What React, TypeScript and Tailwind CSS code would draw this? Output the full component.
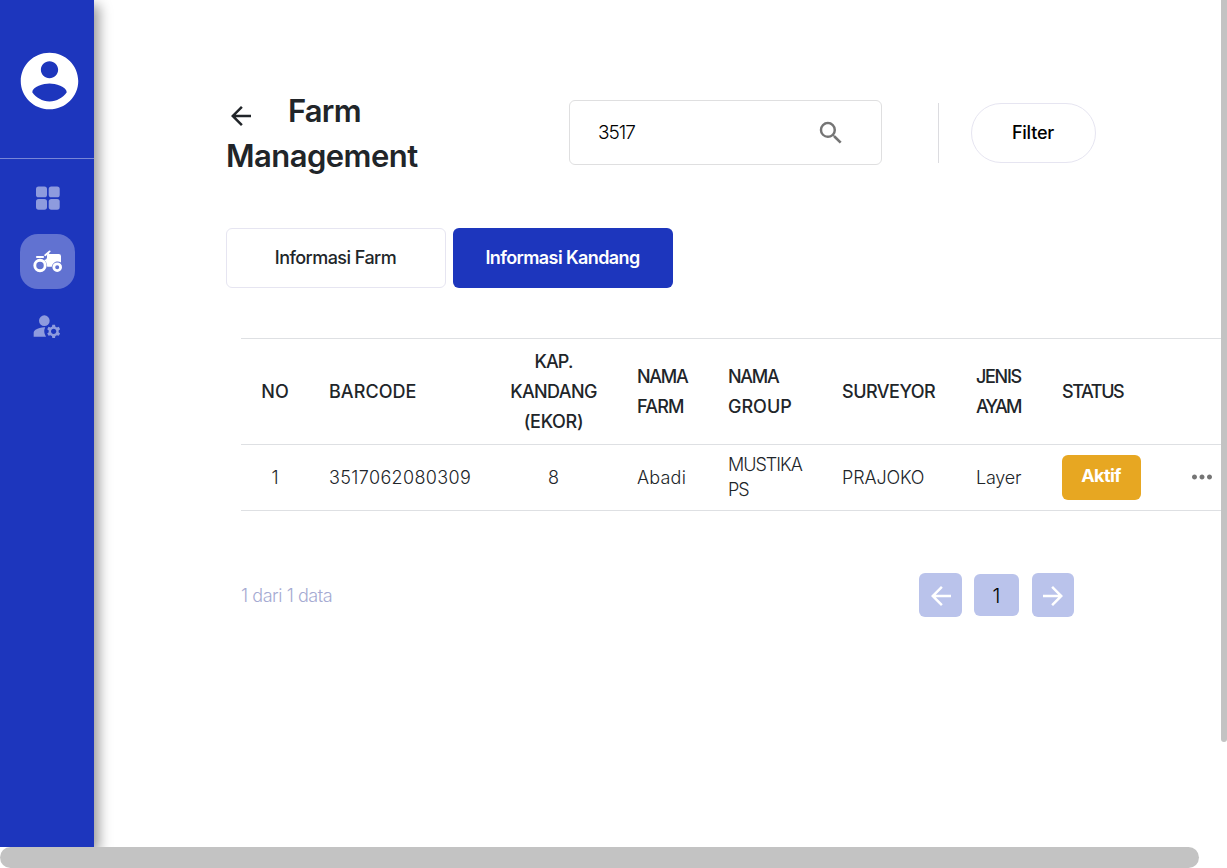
import type { ReactNode } from "react";
import {
  MdArrowBack,
  MdArrowForward,
  MdManageAccounts,
  MdMoreHoriz,
  MdSearch,
} from "react-icons/md";

function AccountIcon() {
  return (
    <svg viewBox="0 0 24 24" className="h-[68px] w-[69px] shrink-0 text-white" fill="currentColor" preserveAspectRatio="none">
      <path d="M12 2C6.48 2 2 6.48 2 12s4.48 10 10 10 10-4.48 10-10S17.52 2 12 2zm0 3c1.66 0 3 1.34 3 3s-1.34 3-3 3-3-1.34-3-3 1.34-3 3-3zm0 14.2c-2.5 0-4.71-1.28-6-3.22.03-1.99 4-3.08 6-3.08 1.99 0 5.97 1.09 6 3.08-1.29 1.94-3.5 3.22-6 3.22z" />
    </svg>
  );
}

function GridIcon() {
  return (
    <svg viewBox="0 0 24 24" className="size-6" fill="currentColor">
      <rect x="0" y="0.5" width="11" height="10.8" rx="2.6" />
      <rect x="12.7" y="0.5" width="11" height="10.8" rx="2.6" />
      <rect x="0" y="12.9" width="11" height="10.8" rx="2.6" />
      <rect x="12.7" y="12.9" width="11" height="10.8" rx="2.6" />
    </svg>
  );
}

function TractorIcon() {
  return (
    <svg viewBox="0 0 31 23" className="h-[23px] w-[31px]" fill="none" stroke="currentColor">
      <path d="M5 7H11" strokeWidth="2.2" strokeLinecap="round" />
      <path d="M13.2 5.2L17.6 1.4" strokeWidth="1.9" strokeLinecap="round" />
      <path
        d="M16 2.6l1.6 1.4h9.2a2.2 2.2 0 0 1 2.2 2.2v6.2c-4-2.2-8.4 0-9.2 4.4h-4.6c0-3-1.2-5.4-3.2-6.8 1.8 0 3-1.2 3-2.7V5z"
        fill="currentColor"
        stroke="none"
      />
      <circle cx="8" cy="15.5" r="5.2" strokeWidth="2.9" />
      <circle cx="25.2" cy="17.2" r="3.4" strokeWidth="2.8" />
    </svg>
  );
}

function Sidebar() {
  return (
    <aside className="relative z-10 flex w-[94px] shrink-0 flex-col bg-[#1d36bd] shadow-[5px_5px_12px_rgba(0,0,0,0.4)]">
      <div className="flex h-[159px] justify-center border-b border-white/40 pt-[47px] pl-[4px]">
        <AccountIcon />
      </div>
      <nav className="flex flex-col items-center gap-[9px] pt-[11px] pl-px">
        <a className="flex size-[55px] items-center justify-center pl-px text-white/50">
          <GridIcon />
        </a>
        <a className="flex size-[55px] items-center justify-center rounded-[18px] bg-white/30 text-white">
          <TractorIcon />
        </a>
        <a className="flex size-[55px] items-center justify-center pr-px text-white/50">
          <MdManageAccounts className="size-8" />
        </a>
      </nav>
    </aside>
  );
}

function Head({ children, className = "" }: { children?: ReactNode; className?: string }) {
  return (
    <th className={`px-5 py-0 align-middle font-medium ${className || "text-left"}`}>{children}</th>
  );
}

function Cell({ children, className = "" }: { children?: ReactNode; className?: string }) {
  return <td className={`px-5 py-0 align-middle ${className || "text-left"}`}>{children}</td>;
}

function FarmTable() {
  return (
    <table className="w-[1010px] table-fixed border-collapse text-[18px]">
      <colgroup>
        <col className="w-[68px]" />
        <col className="w-[181px]" />
        <col className="w-[127px]" />
        <col className="w-[91px]" />
        <col className="w-[114px]" />
        <col className="w-[134px]" />
        <col className="w-[86px]" />
        <col className="w-[129px]" />
        <col className="w-[80px]" />
      </colgroup>
      <thead>
        <tr className="h-[106px] border-y border-[#dee0e3] leading-[30px] whitespace-nowrap text-[#212529]">
          <Head className="text-center tracking-[0.1px]">NO</Head>
          <Head className="text-left tracking-[0.05px]">BARCODE</Head>
          <Head className="text-center tracking-[-0.6px]">
            <span className="tracking-[-0.9px]">KAP.</span>
            <br />
            KANDANG
            <br />
            <span className="tracking-[-0.3px]">(EKOR)</span>
          </Head>
          <Head className="text-left tracking-[-0.8px]">
            <span className="tracking-[-1.3px]">NAMA</span>
            <br />
            FARM
          </Head>
          <Head className="text-left">
            <span className="tracking-[-1.3px]">NAMA</span>
            <br />
            GROUP
          </Head>
          <Head className="text-left tracking-[-0.5px]">SURVEYOR</Head>
          <Head className="text-left tracking-[-1.3px]">
            JENIS
            <br />
            <span className="tracking-[-1.8px]">AYAM</span>
          </Head>
          <Head className="text-left tracking-[-1.4px]">STATUS</Head>
          <Head />
        </tr>
      </thead>
      <tbody>
        <tr className="h-[66px] border-b border-[#dee0e3] leading-[25px] font-light whitespace-nowrap text-[#212529]">
          <Cell className="text-center">1</Cell>
          <Cell className="text-left tracking-[0.36px]">3517062080309</Cell>
          <Cell className="text-center">8</Cell>
          <Cell className="text-left tracking-[0.2px]">Abadi</Cell>
          <Cell className="pb-[2px] text-left tracking-[-1px]">
            MUSTIKA
            <br />
            PS
          </Cell>
          <Cell className="text-left tracking-[-0.15px]">PRAJOKO</Cell>
          <Cell className="text-left tracking-[-0.2px]">Layer</Cell>
          <Cell>
            <div className="flex h-[45px] w-[79px] items-center justify-center rounded-md bg-[#e7a722] pr-px pb-[4px] font-bold tracking-[-0.6px] text-white">
              Aktif
            </div>
          </Cell>
          <Cell>
            <MdMoreHoriz className="-ml-1 size-[30px] -translate-y-px text-[#757575]" />
          </Cell>
        </tr>
      </tbody>
    </table>
  );
}

export default function App() {
  return (
    <div className="flex h-[868px] w-[1227px] flex-col overflow-hidden bg-white font-[Inter,sans-serif] text-[#212529]">
      <div className="flex h-[847px]">
        <Sidebar />
        <main className="min-w-0 flex-1 overflow-hidden pl-[132px]">
          <header className="flex h-[228px] items-start">
            <div className="flex w-[343px] flex-col pt-[88px]">
              <h1 className="text-[31px] leading-[45px] font-semibold">
                <span className="flex items-center">
                  <MdArrowBack className="mt-[11px] mr-[32px] size-[30px]" />
                  <span className="tracking-[-0.8px]">Farm</span>
                </span>
                <span className="block tracking-[-0.55px]">Management</span>
              </h1>
            </div>
            <div className="mt-[100px] flex h-[65px] w-[313px] items-center justify-between rounded-md border border-[#dfdfe0] pr-[35px] pl-[28px]">
              <span className="pt-[2px] text-[19px] font-light tracking-[-1px] text-black">3517</span>
              <MdSearch className="size-[30px] text-[#757575]" />
            </div>
            <div className="mt-[103px] ml-[56px] h-[60px] w-px bg-[#dcdce0]" />
            <button className="mt-[103px] ml-[32px] h-[60px] w-[125px] rounded-full border border-[#e6e5f1] pr-px pb-px text-[18px] font-medium tracking-[-0.2px] text-black">
              Filter
            </button>
          </header>
          <div className="flex gap-[7px] text-[18px]">
            <button className="h-[60px] w-[220px] rounded-md border border-[#e6e5f1] pr-px pb-px font-medium tracking-[-0.55px]">
              Informasi Farm
            </button>
            <button className="h-[60px] w-[220px] rounded-md bg-[#1d36bd] pr-px pb-px font-semibold tracking-[-0.6px] text-white">
              Informasi Kandang
            </button>
          </div>
          <div className="mt-[50px] ml-[15px] w-[980px] overflow-hidden">
            <FarmTable />
          </div>
          <footer className="mt-[62px] ml-[15px] flex w-[833px] items-center justify-between">
            <span className="text-[18px] font-light tracking-[-0.45px] text-[#a5aad2]">1 dari 1 data</span>
            <div className="flex items-center">
              <button className="flex h-[44px] w-[43px] items-center justify-center rounded-md bg-[#bac3eb] pt-px text-white">
                <MdArrowBack className="size-[30px]" />
              </button>
              <button className="mr-[13px] ml-[12px] h-[42px] w-[45px] rounded-md bg-[#bac3eb] pt-px text-[20px] font-light text-black">
                1
              </button>
              <button className="flex h-[44px] w-[42px] items-center justify-center rounded-md bg-[#bac3eb] pt-px text-white">
                <MdArrowForward className="size-[30px]" />
              </button>
            </div>
          </footer>
        </main>
        <div className="w-[6px] shrink-0">
          <div className="h-[742px] rounded-b-full bg-[#c3c3c3]" />
        </div>
      </div>
      <div className="relative z-20 h-[21px] bg-white">
        <div className="h-[21px] w-[1199px] rounded-full bg-[#c3c3c3]" />
      </div>
    </div>
  );
}
